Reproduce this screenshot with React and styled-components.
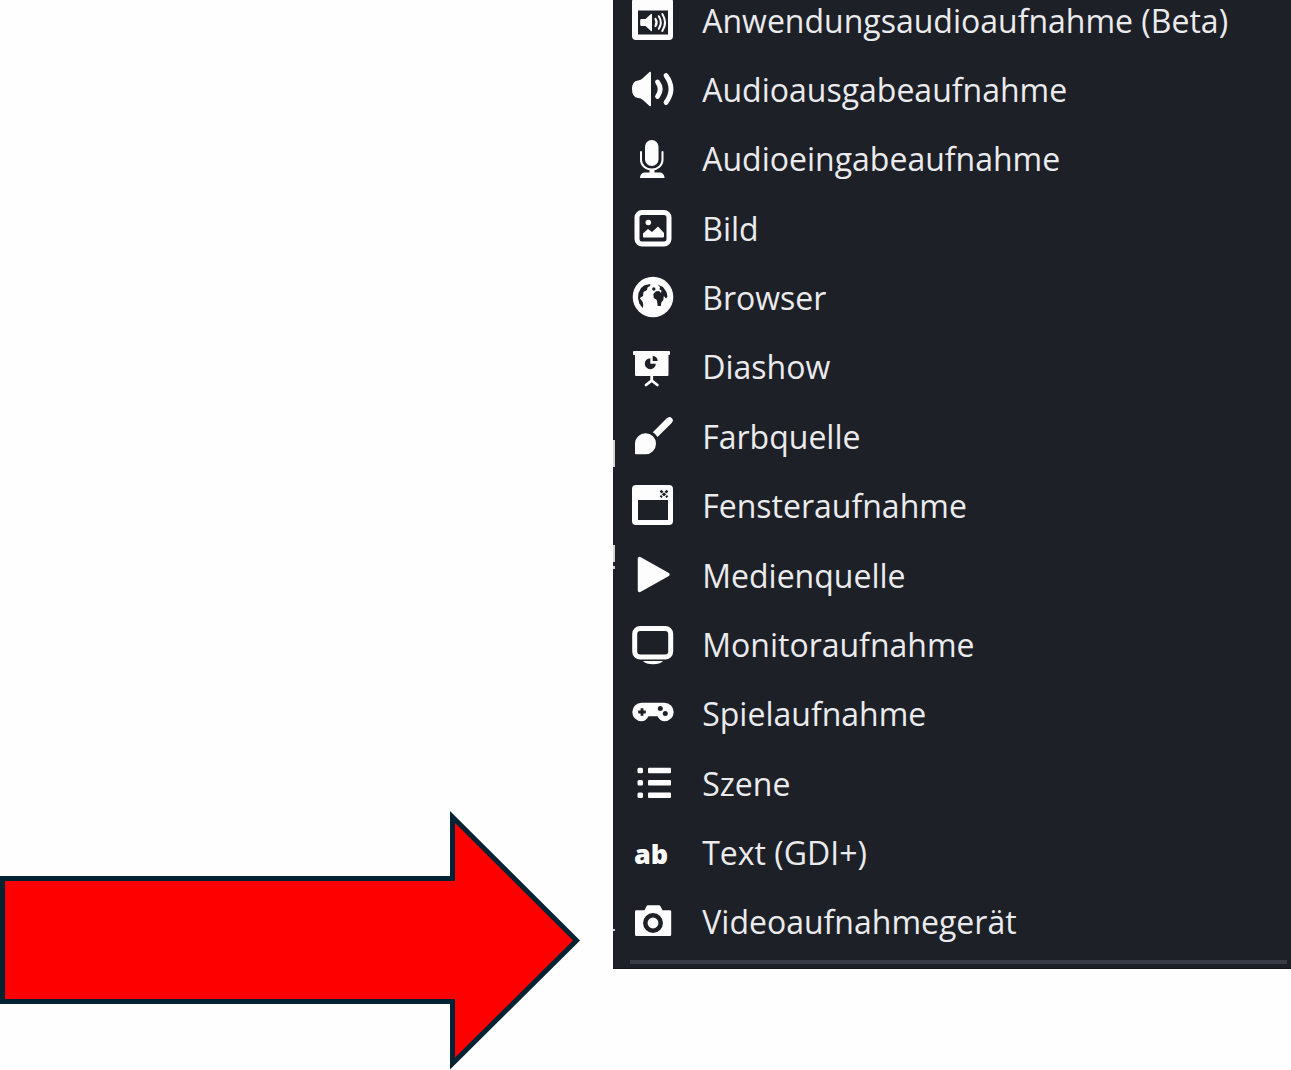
import React from "react";

// styles
import styled, { createGlobalStyle } from 'styled-components'


const GlobalStyle = createGlobalStyle`
*{
    box-sizing: border-box;
}
body{
    margin: 0;
    background-color: #fefefe;
}
`
const Page = styled.main`
display: flex;
min-height: 100vh;
overflow: hidden;
`
const Pointer = styled.div`
display: flex;
flex: 1;
align-items: flex-end;
`
const Arrow = styled.svg`
display: block;
width: 581px;
max-width: 100%;
`
const Panel = styled.nav`
position: relative;
display: flex;
flex-direction: column;
width: 52.5%;
margin-bottom: 101px;
padding: 0 4px 4px 17px;
background-color: #1d2027;
border-bottom: solid 1px #14161b;
`
const List = styled.ul`
display: flex;
flex: 1;
flex-direction: column;
margin: -14px 0 3px;
padding: 0;
list-style: none;
`
const Item = styled.li`
display: flex;
flex: 1;
`
const Source = styled.button`
display: flex;
align-items: center;
width: 100%;
gap: 29px;
padding: 0 3px;
border: none;
background: none;
color: #ebebed;
font-family: 'Open Sans', 'Noto Sans', sans-serif;
font-size: 32px;
line-height: 38px;
text-align: left;
white-space: nowrap;
cursor: pointer;

&:hover{
    background-color: #282c35;
}
`
const Icon = styled.svg`
flex-shrink: 0;
width: 40px;
height: 40px;
overflow: visible;
color: #fdfdfd;
`
const Divider = styled.hr`
width: 100%;
height: 4px;
margin: 0;
border: none;
background-color: #3a3d45;
`
const Edge = styled.span`
position: absolute;
left: 0;
top: ${({ $top }) => $top}%;
width: 2px;
height: ${({ $size }) => $size}px;
background-color: #d5d6d8;
`

const dark = '#1d2027'

const sources = [
    {
        name: 'Anwendungsaudioaufnahme (Beta)',
        icon: (
            <>
                <rect x="-1" y="-3" width="41" height="42" rx="4" fill="currentColor" />
                <rect x="5" y="9.500" width="30" height="24" fill={dark} />
                <path d="M8.500 18h4l5.500-5q1-.8 1 .5v16q0 1.300-1 .5l-5.500-5h-4q-1.300 0-1.300-1.300v-4.400Q7.200 18 8.500 18z" fill="currentColor" />
                <path d="M22.500 18q2.200 3.500 0 7" fill="none" stroke="currentColor" strokeWidth="2.200" strokeLinecap="round" />
                <path d="M25.800 15.200q4 6.300 0 12.600M29.300 13q5.500 8.500 0 17" fill="none" stroke="currentColor" strokeWidth="2" strokeLinecap="round" />
            </>
        )
    },
    {
        name: 'Audioausgabeaufnahme',
        icon: (
            <>
                <path d="M5 10.500Q8 10 10 8L16.500 2Q18 1 18 3V35Q18 37 16.500 36L10 30Q8 28 5 28Q-1 27-1 19.200Q-1 11 5 10.500z" fill="currentColor" />
                <path d="M24.500 12Q30 19 24.500 26.500" fill="none" stroke="currentColor" strokeWidth="4.800" strokeLinecap="round" />
                <path d="M33 5.500Q43 19 33 32.500" fill="none" stroke="currentColor" strokeWidth="4.800" strokeLinecap="round" />
            </>
        )
    },
    {
        name: 'Audioeingabeaufnahme',
        icon: (
            <>
                <rect x="12" y="1" width="13.500" height="26" rx="6.700" fill="currentColor" />
                <path d="M8 13v8a10.700 9.500 0 0 0 21.500 0v-8" fill="none" stroke="currentColor" strokeWidth="2" strokeLinecap="round" />
                <path d="M16.500 30h5v3.500h6q4 1 4 5.500H7q0-4.500 4-5.500h5.500z" fill="currentColor" />
            </>
        )
    },
    {
        name: 'Bild',
        icon: (
            <>
                <rect x="4" y="3.500" width="32" height="31.500" rx="5" fill="none" stroke="currentColor" strokeWidth="5" />
                <circle cx="15.300" cy="13.500" r="2.800" fill="currentColor" />
                <path d="M10 27.500v-3l5-4.500 4 3 6-5.500 6 6.500v3.500q0 1-1 1H11q-1 0-1-1z" fill="currentColor" />
            </>
        )
    },
    {
        name: 'Browser',
        icon: (
            <>
                <circle cx="20" cy="19" r="20.300" fill="currentColor" />
                <path d="M17.500 6L11.500 7.200 8 10 5.500 15 5 20 6.300 25.500 9.500 30 10.300 27.500 9.700 24 6.800 20 10 18 10.500 14 14 12 14.500 9.500 17 8z" fill={dark} />
                <path d="M24.500 6.500l5.500 2.500 3.500 5 1 4.500-1.500 2-2.200-2.500-.5 4-2 2.500-.5 3.500h-3l-1-6-3-2-.5-4 2.700-2.700 3-.3 2 2 .5-2.500-2-1 .5-2.500z" fill={dark} />
                <circle cx="20.800" cy="11" r="1.700" fill={dark} />
            </>
        )
    },
    {
        name: 'Diashow',
        icon: (
            <>
                <path d="M1 4h35q1 0 1 1v2q0 1-1 1h-.5v20q0 1-1 1H3q-1 0-1-1V8H1Q0 8 0 7V5q0-1 1-1z" fill="currentColor" />
                <path d="M18.700 28v5.500L13 38M18.700 33.500l5.700 4.500" fill="none" stroke="currentColor" strokeWidth="2.800" strokeLinecap="round" />
                <path d="M17.300 16.700V11.200a5.500 5.500 0 1 0 5.500 5.500z" fill={dark} />
                <path d="M19.700 14V9a5 5 0 0 1 5 5z" fill={dark} />
            </>
        )
    },
    {
        name: 'Farbquelle',
        icon: (
            <>
                <path d="M19.800 15.200L33.500 1.500q3-2.800 5.200-.5 2.600 2.300-.3 5.200L24.500 20q-1.500-3-4.700-4.800z" fill="currentColor" />
                <path d="M2 36.500V26.500A10.500 10.500 0 1 1 12.500 37.200H3q-1 0-1-.7z" fill="currentColor" />
            </>
        )
    },
    {
        name: 'Fensteraufnahme',
        icon: (
            <>
                <rect x="-1" y="-1" width="41" height="40" rx="4" fill="currentColor" />
                <rect x="5" y="14" width="30" height="20" fill={dark} />
                <path d="M27.500 4.700l7 6.500M34.500 4.700l-7 6.500" stroke={dark} strokeWidth="2.400" strokeDasharray="2.800 1" />
            </>
        )
    },
    {
        name: 'Medienquelle',
        icon: (
            <path d="M6.500 2.500v32L35 18.500z" fill="currentColor" stroke="currentColor" strokeWidth="3.500" strokeLinejoin="round" />
        )
    },
    {
        name: 'Monitoraufnahme',
        icon: (
            <>
                <rect x="1.700" y="3.500" width="36" height="28.500" rx="5.500" fill="none" stroke="currentColor" strokeWidth="5" />
                <path d="M10 36h20q-3 3.300-10 3.300T10 36z" fill="currentColor" />
            </>
        )
    },
    {
        name: 'Spielaufnahme',
        icon: (
            <>
                <path d="M8.500 8.800h23a9.200 9.200 0 0 1 0 18.400q-4.500 0-7-5h-9q-2.500 5-7 5a9.200 9.200 0 0 1 0-18.400z" fill="currentColor" />
                <path d="M9 14.200v7.600M5.200 18h7.600" stroke={dark} strokeWidth="2.800" />
                <circle cx="27.300" cy="14.500" r="2.500" fill={dark} />
                <circle cx="32.300" cy="19.500" r="2.500" fill={dark} />
            </>
        )
    },
    {
        name: 'Szene',
        icon: (
            <g fill="currentColor">
                <rect x="4.500" y="3.700" width="5.500" height="5.500" rx="1.500" />
                <rect x="15" y="3.700" width="23" height="5.500" rx="1" />
                <rect x="4.500" y="16.100" width="5.500" height="5.500" rx="1.500" />
                <rect x="15" y="16.100" width="23" height="5.500" rx="1" />
                <rect x="4.500" y="28.500" width="5.500" height="5.500" rx="1.500" />
                <rect x="15" y="28.500" width="23" height="5.500" rx="1" />
            </g>
        )
    },
    {
        name: 'Text (GDI+)',
        icon: (
            <text x="1" y="31" fill="currentColor" fontFamily="Open Sans, sans-serif" fontSize="27" fontWeight="800">ab</text>
        )
    },
    {
        name: 'Videoaufnahmegerät',
        icon: (
            <>
                <path d="M3.500 8.300h8l2-4q.5-1 1.500-1h11q1 0 1.500 1l2 4H37q1.200 0 1.200 1.200v23.300q0 1.200-1.200 1.200H3.200Q2 34 2 32.800V9.500q0-1.200 1.500-1.200z" fill="currentColor" />
                <circle cx="20" cy="21" r="7.700" fill="none" stroke={dark} strokeWidth="4.500" />
            </>
        )
    }
]

// pieces of the window behind that show along the left side of the menu
const edges = [
    { top: 45.5, size: 27 },
    { top: 56.3, size: 17 },
    { top: 58.5, size: 3 },
    { top: 96, size: 2 }
]

export default function App() {
    return (
        <>
            <GlobalStyle />
            <Page>
                <Pointer>
                    <Arrow viewBox="0 0 581 260" aria-hidden="true">
                        <path
                            d="M2.500 68.500H452.500V7L576.500 130.500 452.500 253.500V191.500H2.500z"
                            fill="#ff0000"
                            stroke="#042433"
                            strokeWidth="5"
                        />
                    </Arrow>
                </Pointer>
                <Panel aria-label="Quellen">
                    <List>
                        {sources.map((item) => (
                            <Item key={item.name}>
                                <Source type="button">
                                    <Icon viewBox="0 0 40 40" aria-hidden="true">{item.icon}</Icon>
                                    {item.name}
                                </Source>
                            </Item>
                        ))}
                    </List>
                    <Divider />
                    {edges.map((edge) => (
                        <Edge key={edge.top} $top={edge.top} $size={edge.size} />
                    ))}
                </Panel>
            </Page>
        </>
    )
}
